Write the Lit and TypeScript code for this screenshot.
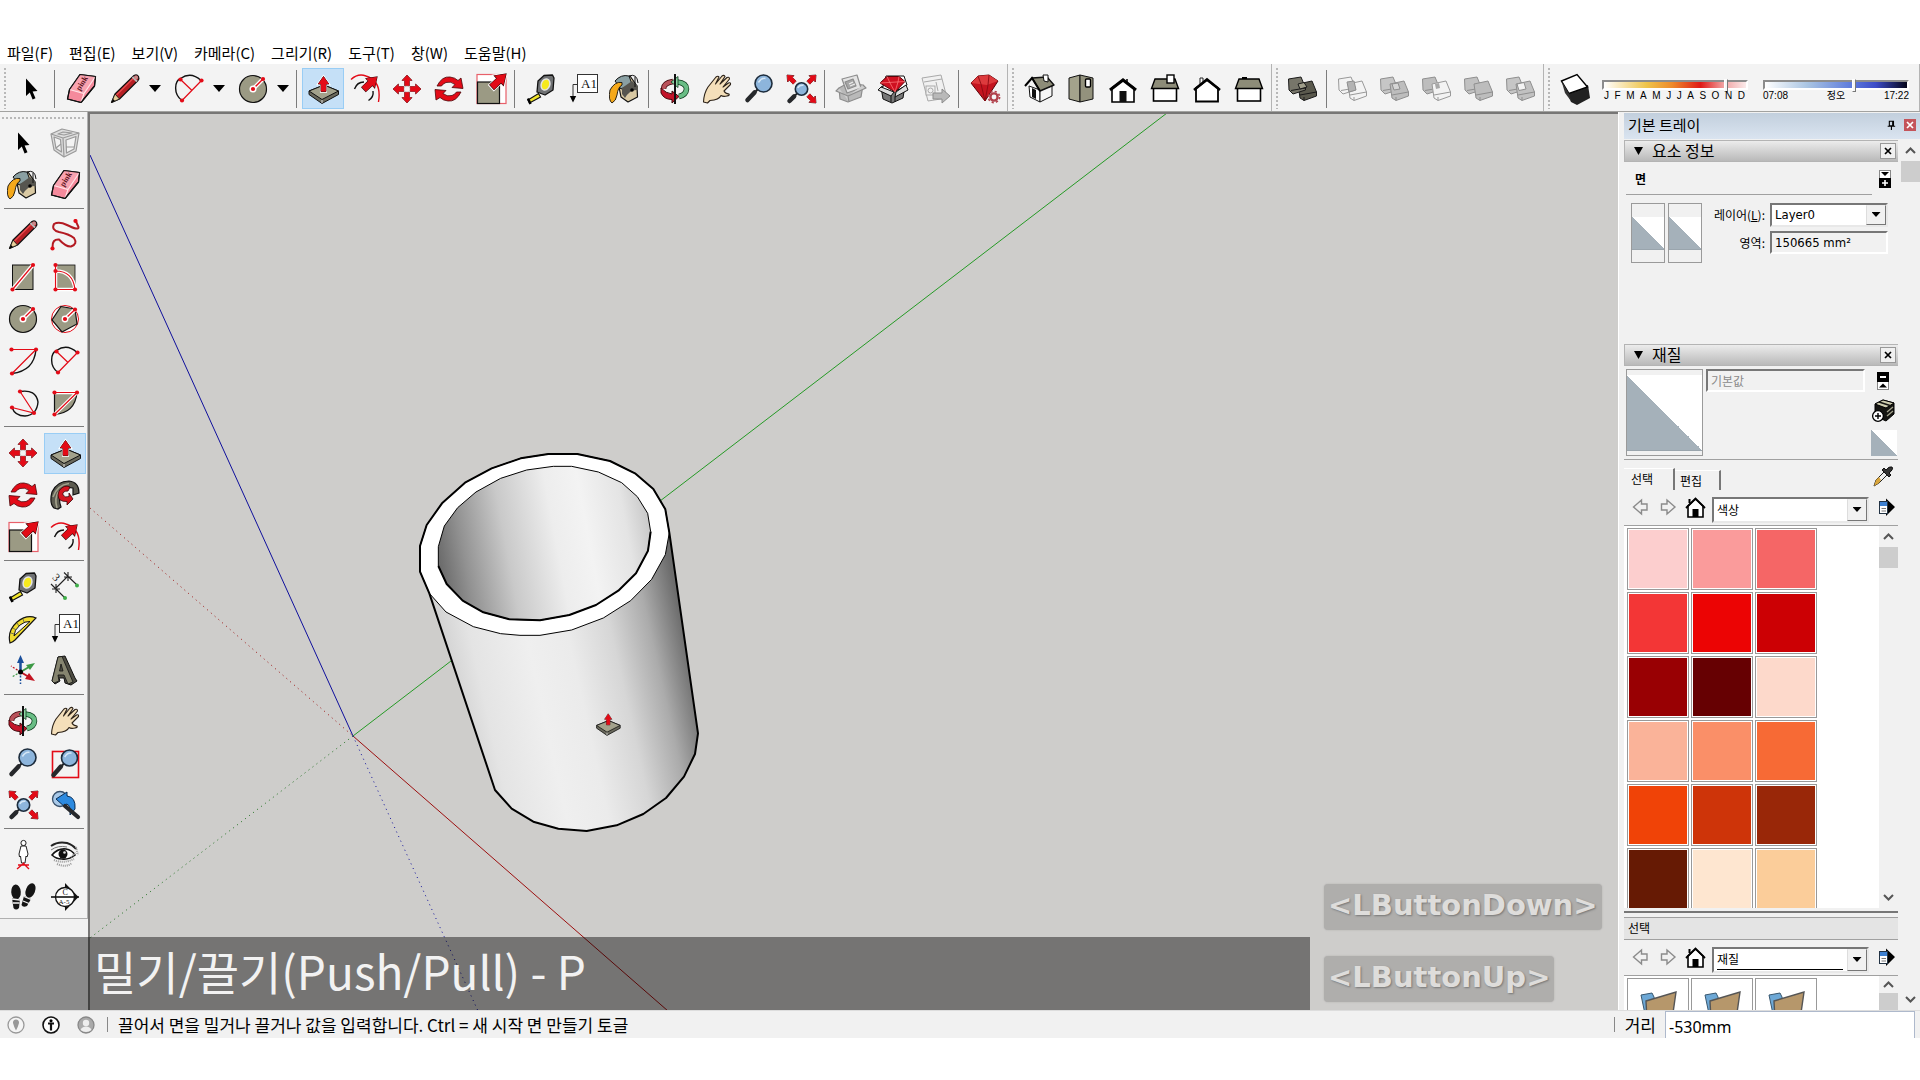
import { LitElement, html, css, svg, TemplateResult, SVGTemplateResult } from "lit";
import { customElement, state } from "lit/decorators.js";
import { classMap } from "lit/directives/class-map.js";
import { styleMap } from "lit/directives/style-map.js";

const RED = "#e30b17";
const INK = "#111";
const OLIVE = "#9b9a84";

const dot = (x: number, y: number) => svg`<circle cx=${x} cy=${y} r="2.1" fill=${RED} />`;

/* A fat arrow that points up, 10 wide and 12 long, its tip at 0,0 */
const fatArrow = (transform: string, halo = false) => svg`
  <path transform=${transform} d="M0 0L5 6H2.4V12H-2.4V6H-5Z" fill=${RED}
    stroke=${halo ? "#fff" : "#3a0508"} stroke-width=${halo ? 2 : 0.8} paint-order="stroke" />`;

const slab = svg`
  <path d="M2 18L17 12L31.500 18V21.500L15 30.500L2 21.500Z" fill="#6a695c" stroke=${INK} stroke-width="1" />
  <path d="M2 18L17 12L31.500 18L15 26.500Z" fill="#a3a28c" stroke=${INK} stroke-width="1" />
  <path d="M15 27V30" stroke="#ddd" stroke-width="1" />`;

const lens = (cx: number, cy: number, r: number, hx: number, hy: number) => svg`
  <path d="M${cx - r * 0.7} ${cy + r * 0.7}L${hx} ${hy}" stroke="#222" stroke-width="2" />
  <path d="M${cx - r * 0.7 - 3} ${cy + r * 0.7 + 3}L${hx} ${hy}" stroke="#26282b" stroke-width="4.500" stroke-linecap="round" />
  <circle cx=${cx} cy=${cy} r=${r} fill="#8db5dc" stroke="#1d2c3c" stroke-width="1.600" />
  <path d="M${cx - r * 0.6} ${cy - 1}Q${cx - 2} ${cy - r * 0.7} ${cx + 2} ${cy - r * 0.6}" stroke="#d6e7f6" stroke-width="1.500" fill="none" />`;

const solidFront = (fill: string, line: string) => svg`
  <path d="M12 12L26 9L30.500 20V24L18 28.500L14 26Z" fill=${fill} stroke=${line} />
  <path d="M14 23L30.500 20M18 28.500V25" stroke=${line} fill="none" />`;
const solidBack = (fill: string, line: string) => svg`
  <path d="M2.500 7L15 5L19.500 16V18L7 22L3 18Z" fill=${fill} stroke=${line} />
  <path d="M5 18.500L19.500 16" stroke=${line} fill="none" />`;

const ICONS: Record<string, SVGTemplateResult> = {
  select: svg`<path d="M11 5.500V23L14.800 19.500L17.600 26.500L20.500 25.200L17.600 18.600L22.500 18Z" fill="#000" />`,
  eraser: svg`
    <path d="M15 1.500L30.500 3.500L29.500 13L16 29.500L2.500 26L4.500 16.500Z" fill="#f58a9c" stroke=${INK} stroke-width="1.200" stroke-linejoin="round" />
    <path d="M4.500 16.500L15 1.500L30.500 3.500L19 20.500Z" fill="#f9a3b0" />
    <path d="M4.500 16.500L19 20.500L30.500 3.500M19 20.500L16 29.500" fill="none" stroke="#ffe2e6" stroke-width="1.200" />
    <path d="M15 1.500L30.500 3.500L29.500 13L16 29.500L2.500 26L4.500 16.500Z" fill="none" stroke=${INK} stroke-width="1.200" stroke-linejoin="round" />
    <text x="11" y="17" transform="rotate(-58 14 14)" font-family="Liberation Serif, serif" font-size="8" font-weight="700" fill="#5c1420">pink</text>`,
  pencil: svg`
    <path d="M2.500 29.500L6 21L25 2.500Q28 1 29.500 3.500Q30.500 5.500 29 7.500L10.500 26Z" fill="#b51f24" stroke=${INK} stroke-width="1.200" stroke-linejoin="round" />
    <path d="M7.500 22L24.500 5" stroke="#e8484c" stroke-width="1.500" />
    <path d="M2.500 29.500L6 21L10.500 26Z" fill="#e9cf9b" stroke=${INK} stroke-width=".8" />
    <path d="M2.500 29.500L4 26L6 28Z" fill="#000" />
    <path d="M23.500 4L28 8.500" stroke="#bbb" stroke-width="1.800" /><circle cx="27" cy="4.500" r="2" fill="#c98a8a" />`,
  arc2: svg`
    <path d="M9 27.500C0 21 1.500 8 7.500 5.500Q18 -2 28 7.500" fill="none" stroke=${INK} stroke-width="1.400" />
    <path d="M9 27.500L28.500 7.500M7.500 6.500L18.500 17" stroke=${RED} stroke-width="1.200" />${dot(7.5, 6.500)}${dot(28.500, 7.500)}${dot(9, 27.500)}`,
  circle: svg`
    <circle cx="16" cy="16" r="13.500" fill=${OLIVE} stroke=${INK} stroke-width="1.200" />
    <path d="M16 16L26 6" stroke="#fff" stroke-width="4" /><path d="M16 16L26 6" stroke=${RED} stroke-width="1.300" />
    <circle cx="16" cy="16" r="3.500" fill="#fff" />${dot(16, 16)}${dot(26, 6)}`,
  push: svg`${slab}${fatArrow("translate(16.500 3.500) scale(1.050 1.250)", true)}${fatArrow("translate(16.500 3.500) scale(1.050 1.250)")}`,
  offset: svg`
    <path d="M2 6.500Q9 0 17 3Q33 8 29.500 29" fill="none" stroke=${RED} stroke-width="1.400" />
    <path d="M5.500 16Q8 9 15 9M24 18Q25 24 19.500 27.500" fill="none" stroke=${INK} stroke-width="1.400" />
    ${fatArrow("translate(28 4) rotate(47) scale(1.250 1.500)")}`,
  move: svg`<g>
    ${fatArrow("translate(16 2) scale(1 .9)")}${fatArrow("translate(30 16) rotate(90) scale(1 .9)")}
    ${fatArrow("translate(16 30) rotate(180) scale(1 .9)")}${fatArrow("translate(2 16) rotate(270) scale(1 .9)")}</g>
    <circle cx="16" cy="16" r="2.600" fill="#f3f3f3" />`,
  rotate: svg`
    <path d="M4 13Q9 3 17 4Q22 4.500 25 7.500L28 5L30 15.500L19 14.500L22 11.500Q18 8 13 9.500Q10 10.500 8.500 13Z" fill=${RED} stroke="#4a0508" stroke-width=".8" />
    <path d="M28 19Q23 29 15 28Q10 27.500 7 24.500L3 27L2 16.500L13 17.500L10 20.500Q14 24 19 22.500Q22 21.500 23.500 19Z" fill=${RED} stroke="#4a0508" stroke-width=".8" />`,
  scale: svg`
    <rect x="2" y="1.500" width="29" height="29" fill="#fff" stroke="#e8606a" stroke-width="1.200" />
    <rect x="2.500" y="9" width="22" height="21.500" fill=${OLIVE} stroke=${INK} stroke-width="1.200" />
    ${fatArrow("translate(31 1) rotate(47) scale(1.300 1.600)", true)}${fatArrow("translate(31 1) rotate(47) scale(1.300 1.600)")}`,
  tape: svg`
    <path d="M3 27L13.500 20.500L15.500 24L4.500 30Z" fill="#f2e52c" stroke=${INK} stroke-width="1.200" /><path d="M3 25.500L5.500 31" stroke="#000" stroke-width="2.500" />
    <path d="M13 8L19 2.500L27.500 2L29 5L28 17L20 22L12 19Z" fill="#6f7173" stroke=${INK} stroke-width="1.300" stroke-linejoin="round" />
    <ellipse cx="20.500" cy="11.500" rx="5" ry="6.500" transform="rotate(20 20.500 11.500)" fill="#e4e4e4" /><ellipse cx="20.500" cy="11.500" rx="3.500" ry="5" transform="rotate(20 20.500 11.500)" fill="#f6ea1d" />`,
  text: svg`
    <rect x="10.500" y="1.500" width="20" height="18" fill="#fff" stroke="#333" /><path d="M10 11.500H6V24" fill="none" stroke="#333" /><path d="M2.800 23H9.200L6 29.500Z" fill="#000" />
    <text x="14" y="15" font-family="Liberation Serif, serif" font-size="13" fill="#111">A1</text>`,
  paint: svg`
    <path d="M9 9L21 3L28 13L28.500 24L19 29L12 24Z" fill="#d9c9a3" stroke=${INK} stroke-width="1.200" stroke-linejoin="round" />
    <path d="M6 8Q12 1 20 3L23 11L12 16Z" fill="#8aa0a3" stroke=${INK} /><path d="M13 21L13 15L23 8L29 13V17Q21 16 16 25Z" fill="#56554f" />
    <path d="M20 3Q28 0 29 10M26 4V14" fill="none" stroke=${INK} /><circle cx="23" cy="17" r="1.800" fill="#000" />
    <path d="M13 9.500Q6 8 1 17Q-1 27 3 30Q7 28 8 22Q9 14 13 12Z" fill="#f5a91b" stroke=${INK} stroke-width=".9" />`,
  orbit: svg`
    <path d="M14 8.500Q4.500 10 4.500 16" fill="none" stroke="#40070b" stroke-width="5.500" /><path d="M14 8.500Q4.500 10 4.500 16" fill="none" stroke="#b9525a" stroke-width="4" />
    <path d="M18 9Q27.500 10 27.500 16Q27 22 20 23.500" fill="none" stroke="#0c3b1c" stroke-width="5.500" /><path d="M18 9Q27.500 10 27.500 16Q27 22 20 23.500" fill="none" stroke="#69bd85" stroke-width="4" />
    <path d="M19 3.500V14.500L12 9Z" fill="#8ed5a4" stroke="#0c3b1c" stroke-width=".8" />
    <path d="M2 15V20Q5 26.500 13 26.500V30L20 23.500L13 18V21Q7 20.500 2 15Z" fill="#c4142a" stroke="#40070b" />
    <path d="M16 1V31" stroke="#111" stroke-width="2" />`,
  hand: svg`<path d="M2.500 29Q3 20 7 14L15 4Q17 2.500 18 4L14.500 11L21 3Q23 1.500 24 3.500L19 11L26 4.500Q28.500 3.500 28.500 6L22 14L27.500 10Q30 9 29.500 11.500L23 18Q24 20.500 28 21Q29 22.500 26 23Q22 24 20 22.500Q18 27 9 27.500L6.500 30Z" fill="#f4dfba" stroke="#2b2117" stroke-width="1.100" stroke-linejoin="round" />`,
  zoom: svg`${lens(20.5, 10.500, 8.500, 4.500, 27)}`,
  extents: svg`
    ${lens(16.5, 16, 6.200, 4.500, 28)}
    ${fatArrow("translate(2 2) rotate(315) scale(.9)")}${fatArrow("translate(31 2) rotate(45) scale(.9)")}${fatArrow("translate(31 30) rotate(135) scale(.9)")}`,
  warehouseGet: svg`
    <g fill="#b9b9b9" stroke="#8d8d8d" stroke-linejoin="round" stroke-width="1.200"><path d="M4 15L13 10L28 12L26 24L13 29L5 26Z" /><path d="M7 6L22 2L26 15L12 20Z" fill="#e3e3e3" /><path d="M10 9L18 6L21 13L13 16Z" fill="#a6a6a6" /><path d="M14 11L18 9M15 13L20 11" stroke="#eee" /><path d="M4 15L1 18L13 23L14 29M13 23L31 15L28 12" fill="#cfcfcf" /></g>`,
  warehouseShare: svg`
    <path d="M4 14L12 10L28 12L26 25L15 30L6 26Z" fill="#777" stroke=${INK} /><path d="M9 3L27 3L30 12L17 19L5 17Z" fill="#fff" stroke=${INK} />
    <path d="M3 10L10 3.500H22L28 8.500L18 19Z" fill="#cf1020" stroke="#5d0409" /><path d="M3 10L28 8.500M10 3.500L13 10L18 19L21 9L22 3.500" fill="none" stroke="#ff8080" stroke-width=".7" />
    <path d="M4 14L1 17L14 23L17 19ZM19 19L29 12L31 17L18 24Z" fill="#ddd" stroke=${INK} /><path d="M14 23V29M18 24V29" stroke=${INK} />`,
  warehouseLayout: svg`
    <g fill="#f0f0f0" stroke="#a9a9a9"><path d="M3 5L22 2L28 25L9 28Z" /><path d="M5 9L23 6" /><rect x="7" y="13" width="9" height="9" /><circle cx="11.500" cy="17.500" r="2.500" /><path d="M17 9L19 18" /></g>
    <path d="M14 20H23V16L31 23L23 30V26H14Z" fill="#b9b9b9" stroke="#8d8d8d" />`,
  extension: svg`
    <path d="M2 10L9 3L20 2L29 8L16 28Z" fill="#c4141f" stroke="#5d0409" /><path d="M9 3L20 2L29 8L18 12L2 10Z" fill="#dd3a3d" /><path d="M9 3L12 11L16 28L19 12L20 2" fill="none" stroke="#8b0a12" stroke-width=".9" />
    <circle cx="25" cy="24" r="3.600" fill="#f3f3f3" stroke="#b0404a" stroke-width="2.400" /><circle cx="25" cy="24" r="5.600" fill="none" stroke="#b0404a" stroke-width="1.600" stroke-dasharray="2.200 2.200" />`,
  iso: svg`
    <path d="M6 13L17 17V29L7 24Z" fill="#fff" stroke=${INK} /><path d="M17 17L29 13V23L17 29Z" fill="#f7f7f7" stroke=${INK} /><path d="M9 15L13 17V26L9 24Z" fill="#111" />
    <path d="M9 5L24 4L31 12L17 18Z" fill="#8d8c78" stroke=${INK} stroke-width="1.400" stroke-linejoin="round" /><path d="M2 13L9 5L17 18" fill="none" stroke="#000" stroke-width="2" /><path d="M20 2H25V9L21 8Z" fill="#fff" stroke=${INK} />`,
  top: svg`<path d="M4 5L15 2V29L4 26Z" fill="#a3a28c" stroke=${INK} /><path d="M15 2L28 5V26L15 29Z" fill="#93927d" stroke=${INK} /><rect x="20.500" y="6" width="5" height="8" rx="1" fill="#fff" stroke="#000" stroke-width="1.400" />`,
  front: svg`<path d="M5 15V29H27V15L16 7Z" fill="#fff" stroke="#000" stroke-width="1.600" /><path d="M3 17L16 7L29 17" fill="none" stroke="#000" stroke-width="3" /><rect x="12.500" y="18" width="7" height="11" fill="#111" /><path d="M20 6V9" stroke="#000" stroke-width="1.500" />`,
  right: svg`<rect x="4.500" y="15" width="23" height="13" fill="#fff" stroke="#000" stroke-width="1.600" /><path d="M6 6H26L29.500 15.500H2.500Z" fill="#8d8c78" stroke="#000" stroke-width="1.400" /><rect x="18" y="2" width="7" height="8" fill="#fff" stroke="#000" stroke-width="1.400" />`,
  back: svg`<path d="M9 11V5H12V9" fill="#fff" stroke="#222" /><path d="M5 15V28.500H27V15L16 7Z" fill="#fff" stroke="#000" stroke-width="1.800" /><path d="M3 17L16 6.500L29 17" fill="none" stroke="#000" stroke-width="2.600" />`,
  left: svg`<rect x="4.500" y="15" width="23" height="13" fill="#fff" stroke="#000" stroke-width="1.600" /><path d="M6 6H26L29.500 15.500H2.500Z" fill="#8d8c78" stroke="#000" stroke-width="1.400" /><path d="M9 5H14" stroke="#000" stroke-width="2" />`,
  shell: svg`<g stroke-linejoin="round" transform="translate(-1 -1)">${solidFront("#5a594d", "#1a1a1a")}${solidBack("#77766a", "#1a1a1a")}<path d="M12 12L18 10.500L21 15L14 17Z" fill="#a09f8b" stroke="#1a1a1a" /></g>`,
  intersect: svg`<g stroke-linejoin="round" transform="translate(-1 -1)">${solidFront("none", "#999")}${solidBack("none", "#999")}<path d="M11 10L18 9L20 18L13 20Z" fill="#b3b3b3" stroke="#8f8f8f" /></g>`,
  union: svg`<g stroke-linejoin="round" transform="translate(-1 -1)">${solidBack("#c6c6c6", "#8f8f8f")}${solidFront("#bdbdbd", "#8f8f8f")}<path d="M14 12L20 11L22 17L16 18Z" fill="#d6d6d6" stroke="#8f8f8f" /></g>`,
  subtract: svg`<g stroke-linejoin="round" transform="translate(-1 -1)">${solidBack("#bdbdbd", "#8f8f8f")}${solidFront("#f3f3f3", "#999")}<path d="M15 12L19 11L20 16L16 17Z" fill="#a8a8a8" /></g>`,
  trim: svg`<g stroke-linejoin="round" transform="translate(-1 -1)">${solidBack("#c1c1c1", "#8f8f8f")}${solidFront("#bdbdbd", "#8f8f8f")}</g>`,
  split: svg`<g stroke-linejoin="round" transform="translate(-1 -1)">${solidBack("#c6c6c6", "#8f8f8f")}${solidFront("#c1c1c1", "#8f8f8f")}<path d="M13 12L20 10.500L22 17L15 18.500Z" fill="#f3f3f3" stroke="#8f8f8f" /></g>`,
  shadow: svg`<path d="M7 17L12 29L18 32L31 25L29 12Z" fill="#222" /><path d="M2.500 8L18 1.500L28.500 14L10 20.500Z" fill="#fff" stroke="#000" stroke-width="1.400" /><path d="M2.500 8L6 20L12 28L10 20.500Z" fill="#333" />`,
  component: svg`
    <g fill="#dedede" stroke="#9a9a9a" stroke-linejoin="round" stroke-width="1.200"><path d="M2 7L13 2L30 6L27 24L15 30L5 23Z" /><path d="M2 7L14 11L30 6M14 11L15 30" fill="none" /><path d="M5 10L11.500 12.500L12.500 25L7 21.500ZM17 13L27 9.500L25 22L17.500 26Z" fill="#f3f3f3" /><path d="M7 21L12 17M17 20L25 20M9 7L14 5L23 6L15 8Z" /></g>`,
  freehand: svg`<path d="M3.500 28.500Q3 20 10 20.500Q17 28 22 27.500Q29 25 25 19Q20 15 10 13Q2 11 5 5Q10 2 18 6Q30 12 29.500 8L26.500 1.500" fill="none" stroke="#b31a22" stroke-width="2" />${dot(26.500, 2)}${dot(3.500, 29.500)}`,
  rect: svg`<rect x="5.500" y="4" width="20.500" height="24.500" fill=${OLIVE} stroke=${INK} /><path d="M5.500 28.500L26 4" stroke="#fff" stroke-width="4" /><path d="M5.500 28.500L26 4" stroke=${RED} stroke-width="1.200" />${dot(26, 4)}${dot(5.500, 28.500)}`,
  rotRect: svg`<rect x="6.500" y="4" width="19.500" height="24.500" fill=${OLIVE} stroke=${INK} stroke-width=".8" /><path d="M6.500 4V28.500H26M6.500 10Q24 10 26 28.500" fill="none" stroke="#fff" stroke-width="3.500" /><path d="M6.500 4V28.500H26M6.500 10Q24 10 26 28.500" fill="none" stroke=${RED} stroke-width="1.200" />${dot(6.500, 4)}${dot(6.500, 10)}${dot(6.500, 28.500)}${dot(26, 28.500)}`,
  polygon: svg`<circle cx="16" cy="16" r="13.500" fill="#fff" stroke=${RED} /><path d="M12 3.500L26 6L28 21L13 29L3 17Z" fill=${OLIVE} stroke=${INK} stroke-width="1.200" /><path d="M16 16L26 6.500" stroke="#fff" stroke-width="4" /><path d="M16 16L26 6.500" stroke=${RED} stroke-width="1.200" /><circle cx="16" cy="16" r="3.400" fill="#fff" />${dot(16, 16)}${dot(26, 6.500)}`,
  arc: svg`<path d="M29 4.500Q27 26 5 28.500" fill="none" stroke=${INK} stroke-width="1.400" /><path d="M4.500 4.500H29L5 28.500" fill="none" stroke=${RED} stroke-width="1.200" />${dot(4.500, 4.500)}${dot(29, 4.500)}${dot(5, 28.500)}`,
  arc3: svg`<path d="M13 4.500Q29 2 31 15Q30 28 18 29Q8 29 5 20.500" fill="none" stroke=${INK} stroke-width="1.400" /><path d="M13 4.500L27 26L5 20.500" fill="none" stroke=${RED} stroke-width="1.200" />${dot(13, 4.500)}${dot(27, 26)}${dot(5, 20.500)}`,
  pie: svg`<path d="M5.500 5.500H28Q26 26 5.500 27.500Z" fill=${OLIVE} stroke=${INK} stroke-width="1.200" /><path d="M5.500 5.500H28L5.500 27.500" fill="none" stroke="#fff" stroke-width="3.400" /><path d="M5.500 5.500H28L5.500 27.500" fill="none" stroke=${RED} stroke-width="1.200" />${dot(5.500, 5.500)}${dot(28, 5.500)}${dot(5.500, 27.500)}`,
  follow: svg`<path d="M30 14Q30 3 20 2Q8 2 3 13Q0 24 5 29L9 30L12 28Q9 20 12 14Q17 7 24 9L24 16Z" fill="#5c5b50" stroke=${INK} stroke-width="1.200" /><path d="M4 18Q8 6 20 4.500M8 29Q5 19 10 12" fill="none" stroke="#a3a28c" stroke-width="1.600" />
    <path d="M10 12Q15 5 21 8L19 12Q13 12 14 16Q16 19 20 17.500V14L24 20L18 26V22.500Q9 23 9 16Z" fill="#d5141f" stroke="#3a0508" stroke-width=".8" />`,
  dimension: svg`<path d="M6.500 17.500L19 5M2 13L13 24L16 27M15 1.500L28 14M19 1V10M7 13V22M3 18H11M15 6H23" fill="none" stroke="#222" stroke-width="1.100" /><circle cx="16" cy="27" r="2" fill="#3fae49" /><circle cx="28" cy="14.500" r="2" fill="#3fae49" /><text x="4" y="10" transform="rotate(45 7 7)" font-family="Liberation Serif, serif" font-size="11" fill="#111">3</text>`,
  protractor: svg`<path d="M3 30Q0 18 10 9Q20 1 29 5L8 27Q6 29 3 30Z" fill="#f0dc2e" stroke=${INK} stroke-width="1.200" /><path d="M7 23Q7 17 13 12Q18 8 23 8.500Z" fill="#f3f3f3" stroke=${INK} /><path d="M4 20L7 21M6 15L9 17M10 10L12 13M16 6L17 9" stroke="#555" stroke-width=".8" />`,
  axes: svg`<path d="M13.500 17V7" stroke="#1a4f9c" stroke-width="2.500" /><path d="M13.500 0L17 8H10Z" fill="#1a4f9c" /><path d="M13.500 17L22 12" stroke="#3c9a45" stroke-width="2" /><path d="M28 8L23 15L19 10Z" fill="#3c9a45" /><path d="M13.500 17L22 22" stroke="#c31522" stroke-width="2" /><path d="M28 26L18 24L22 18Z" fill="#c31522" />
    <path d="M13.500 17V29" stroke="#1a4f9c" stroke-width="1.500" stroke-dasharray="2 1.500" /><path d="M13.500 17L4 11" stroke="#c31522" stroke-width="1.300" stroke-dasharray="2 1.500" /><path d="M13.500 17L5 22" stroke="#3c9a45" stroke-width="1.300" stroke-dasharray="2 1.500" /><circle cx="13.500" cy="17" r="2.500" fill="#000" />`,
  text3d: svg`<path d="M3 26L9 2L16 1L26 23L28 26L22 30L16 28L15 23H10L11 26L6 29Z" fill="#4d4c42" stroke=${INK} /><path d="M3 26L9 2L13 1.500L24 27L19 29L15 20H9L10 26L5 28ZM10.500 16H14L12 9Z" fill="#85846f" stroke=${INK} stroke-width=".8" fill-rule="evenodd" />`,
  zoomWindow: svg`<rect x="3.500" y="4.500" width="26" height="26" fill="none" stroke=${RED} stroke-width="1.600" />${lens(20.5, 11, 8, 4.500, 28)}`,
  previous: svg`<circle cx="11" cy="10" r="7.500" fill="#a9c9e8" stroke="#38506a" stroke-width="1.300" /><path d="M7 10L18 3V7Q27 8 26 20L21 26Q22 15 17 15V19Z" fill="#2c8ae0" stroke="#0b2e55" /><path d="M16 17L29 28" stroke="#26282b" stroke-width="4.200" stroke-linecap="round" />`,
  position: svg`<circle cx="16.500" cy="4" r="2.600" fill="#fff" stroke="#222" /><path d="M14 7H19L21 15L20 18L19 17L18 24H14.500L13.500 17L12.500 18L12 15Z" fill="#fff" stroke="#222" /><path d="M16 24L22 30M17 24L10 30M11 26H22" stroke=${RED} stroke-width="1.400" />`,
  look: svg`<path d="M2 7Q9 2 18 4Q24 6 27 10" fill="none" stroke="#222" stroke-width="2" /><path d="M2 11Q9 6 18 8" fill="none" stroke="#777" />
    <path d="M3 16Q9 9 17 10Q23 11 26 16Q20 21 13 20Q7 20 3 16Z" fill="#fff" stroke="#111" stroke-width="1.600" /><circle cx="14" cy="15" r="4.500" fill="#111" /><circle cx="15.500" cy="13.500" r="1.300" fill="#ddd" />
    <path d="M5 21Q14 25 25 20M8 25Q17 29 23 24" fill="none" stroke="#999" stroke-width="2" stroke-dasharray="1 1" /><path d="M27 8L29 16M22 18L27 14" stroke="#999" stroke-width="2" stroke-dasharray="1 1" />`,
  walk: svg`<g fill="#151515"><ellipse cx="9" cy="11" rx="4.800" ry="7.500" transform="rotate(-4 9 11)" /><path d="M5 17L13 18L12 27Q9 30 6.500 27Z" /><ellipse cx="23.500" cy="9.500" rx="4.600" ry="7.500" transform="rotate(22 23.500 9.500)" /><path d="M17 15L24 18L20 25Q16 27 14.500 24Z" /></g><path d="M5 18L13 19M6 22H12.500M17 15.500L24 18.500M16 20L22 22.500" stroke="#f3f3f3" stroke-width="1.300" />`,
  section: svg`<path d="M16 2L29.500 16L16 30Z" fill="#111" /><circle cx="16" cy="16" r="9.500" fill="#fff" stroke="#111" stroke-width="1.300" /><path d="M2 16H30" stroke="#111" stroke-width="1.600" />
    <text x="13.500" y="14" font-family="Liberation Serif, serif" font-size="8" fill="#111">C</text><text x="9.500" y="22.500" font-family="Liberation Serif, serif" font-size="7" fill="#111">A-5</text>`,
  backNav: svg`<path d="M9.500 15L17.500 8V12H23V18H17.500V22Z" fill="#f1f1f1" stroke="#8b8b8b" stroke-width="1.400" />`,
  nextNav: svg`<path d="M24 15L16 8V12H10.500V18H16V22Z" fill="#f1f1f1" stroke="#8b8b8b" stroke-width="1.400" />`,
  home: svg`<path d="M10 14V25H25V14L17.500 7Z" fill="#fff" stroke="#000" stroke-width="1.600" /><path d="M8 16L17.500 6.500L27 16" fill="none" stroke="#000" stroke-width="1.800" /><rect x="14.500" y="17" width="6" height="8" fill="#000" /><path d="M11.500 11V7" stroke="#000" stroke-width="2" />`,
  details: svg`<path d="M15 6.500L24 15L15 24V20H9V11H15Z" fill="#000" /><rect x="8.500" y="9.500" width="8" height="12" fill="#fff" stroke="#234" /><rect x="9" y="10" width="7" height="4" fill="#3c7fd0" /><path d="M10.500 16.500H15M10.500 19H15" stroke="#777" />`,
  dropper: svg`<path d="M8 28L10 22L18 14L21 17L13 25Z" fill="#eee" stroke="#222" /><path d="M8 28L10 22L13 19L15 22L13 25Z" fill="#d9a53a" /><path d="M16 12L23 19L25 17L23 15Q28 11 26 9Q23 8 20 12L18 10Z" fill="#333" stroke="#111" />`,
  create: svg`<path d="M8 10L16 6L27 9V20L19 27L8 22Z" fill="#151512" stroke="#000" /><path d="M8 10L19 14L27 9L16 6Z" fill="#cfcdb0" stroke="#000" /><path d="M12 8L23 11.500" stroke="#151512" stroke-width="1.600" /><path d="M20 18L26 13M20 22L26 17" stroke="#a3a28c" stroke-width="1.300" /><circle cx="11" cy="22" r="5.400" fill="#fff" stroke="#000" stroke-width="1.300" /><path d="M11 19V25M8 22H14" stroke="#000" stroke-width="1.400" />`,
};

const icon = (name: string) => html`<svg class="icon" viewBox="0 0 32 32" aria-hidden="true">${ICONS[name]}</svg>`;

type Tool = [id: string, label: string, split?: boolean] | "|";

const MAIN_GROUPS: Tool[][] = [
  [
    ["select", "선택"], "|", ["eraser", "지우개"], ["pencil", "선", true], ["arc2", "호", true], ["circle", "원", true], "|",
    ["push", "밀기/끌기"], ["offset", "오프셋"], ["move", "이동"], ["rotate", "회전"], ["scale", "배율"], "|",
    ["tape", "줄자"], ["text", "문자"], ["paint", "페인트통"], "|",
    ["orbit", "궤도"], ["hand", "이동 보기"], ["zoom", "확대/축소"], ["extents", "범위 확대"], "|",
    ["warehouseGet", "모델 가져오기"], ["warehouseShare", "모델 공유"], ["warehouseLayout", "레이아웃으로 보내기"], "|", ["extension", "확장 프로그램"],
  ],
  [["iso", "등각"], ["top", "평면"], ["front", "정면"], ["right", "우측"], ["back", "후면"], ["left", "좌측"]],
  [["shell", "외부 쉘"], "|", ["intersect", "교차"], ["union", "결합"], ["subtract", "빼기"], ["trim", "잘라내기"], ["split", "분할"]],
];

const SIDE_GROUPS: [string, string][][] = [
  [["select", "선택"], ["component", "구성 요소"], ["paint", "페인트통"], ["eraser", "지우개"]],
  [["pencil", "선"], ["freehand", "자유형"], ["rect", "직사각형"], ["rotRect", "회전 직사각형"], ["circle", "원"], ["polygon", "다각형"], ["arc", "호"], ["arc2", "2점 호"], ["arc3", "3점 호"], ["pie", "파이"]],
  [["move", "이동"], ["push", "밀기/끌기"], ["rotate", "회전"], ["follow", "따라가기"], ["scale", "배율"], ["offset", "오프셋"]],
  [["tape", "줄자"], ["dimension", "치수"], ["protractor", "각도기"], ["text", "문자"], ["axes", "축"], ["text3d", "3D 문자"]],
  [["orbit", "궤도"], ["hand", "이동 보기"], ["zoom", "확대/축소"], ["zoomWindow", "창 확대"], ["extents", "범위 확대"], ["previous", "이전"]],
  [["position", "카메라 배치"], ["look", "둘러보기"], ["walk", "걷기"], ["section", "단면"]],
];

const MENUS = ["파일(F)", "편집(E)", "보기(V)", "카메라(C)", "그리기(R)", "도구(T)", "창(W)", "도움말(H)"];

const COLORS = [
  "#fccece", "#fa9b9b", "#f56666", "#f33636", "#ec0404", "#cc0004", "#990003", "#660002", "#fdd9cb",
  "#fab399", "#fa8f68", "#f76a35", "#f04307", "#ce3409", "#992708", "#661a04", "#fee6d0", "#fbcd9a",
];

@customElement("app-root")
export class AppRoot extends LitElement {
  @state() private tool = "push";

  static styles = css`
    :host {
      display: flex; flex-direction: column; box-sizing: border-box; height: 100vh; min-height: 700px;
      padding: 40px 0 42px; background: #fff; color: #000; overflow: hidden;
      font-family: "Noto Sans CJK KR", sans-serif; font-size: 15px; line-height: 20px;
    }
    * { box-sizing: border-box; }
    button, input, select { font: inherit; color: inherit; margin: 0; padding: 0; border: 0; border-radius: 0; background: none; }
    .icon { width: 32px; height: 32px; display: block; flex: none; }

    .menu { display: flex; gap: 16px; height: 24px; padding: 3px 7px 1px; }
    .menu button { white-space: nowrap; }

    .bars { display: flex; height: 48px; background: #f3f3f3; border-bottom: 1px solid #a2a2a0; }
    .bar { display: flex; padding: 4px 1px 2px 4px; border-right: 1px solid #b4b4b4; }
    .bar.wide { flex: 1; padding-right: 10px; }
    .grip { flex: none; width: 2px; margin-right: 4px; background: repeating-linear-gradient(#b8b8b8 0 2px, transparent 2px 4px); }
    .tool { display: grid; place-items: center; width: 42px; height: 41px; }
    .tool.on { background: #c5e0f7; border: 1px solid #99cdf5; }
    .pair { display: flex; padding-left: 2px; }
    .drop { width: 20px; height: 41px; display: grid; place-items: center start; padding-left: 3px; }
    .rule { flex: none; width: 1px; margin: 2px 5px 1px 2px; background: #7c7c7c; }
    .tri { width: 12px; height: 7px; background: #000; clip-path: polygon(0 0, 100% 0, 50% 100%); }
    .tri.small { width: 9px; height: 5px; }

    .sun { flex: 1; display: flex; flex-direction: column; padding-top: 12px; margin-left: 6px; font: 10px/12px "Liberation Sans", "Noto Sans CJK KR", sans-serif; }
    .sun + .sun { margin-left: 15px; }
    .range { appearance: none; width: 100%; height: 10px; border: 2px solid; border-color: #8c8c8c #fff #fff #8c8c8c; }
    .range.months { background: linear-gradient(90deg, #fff, #efc44a 30%, #ee8a2a 48%, #e01a16 68%, #f0a0a0 84%, #fbeaea); }
    .range.hours { background: linear-gradient(90deg, #fff, #a9c4e2 30%, #5b78dc 62%, #3d4cc8 78%, #05051a); }
    .range::-webkit-slider-thumb { appearance: none; width: 4px; height: 13px; background: #f6f6f6; border: 1px solid; border-color: #fff #777 #777 #fff; }
    .ticks { display: flex; justify-content: space-between; padding: 0 3px 0 2px; }
    .hours-ticks { padding: 0; }

    .main { flex: 1; display: flex; min-height: 0; position: relative; background: #f1f1f1; }
    .side { flex: none; width: 88px; }
    .toolbox { padding: 5px 1px 0 2px; border-right: 1px solid #b0b0b0; border-bottom: 1px solid #b0b0b0; background: #f3f3f3; }
    .grip-h { height: 2px; margin-bottom: 3px; background: repeating-linear-gradient(90deg, #b8b8b8 0 2px, transparent 2px 4px); }
    .pairs { display: grid; grid-template-columns: 42px 42px; grid-auto-rows: 42px; align-items: center; }
    .rule-h { height: 1px; margin: 2px 2px 5px; background: #7c7c7c; }

    .stage { flex: 1; min-width: 0; background: #cecdcb; border: solid #777675; border-width: 2px 0 0 2px; overflow: hidden; position: relative; }
    .scene { display: block; width: 100%; height: 100%; }
    .caption { position: absolute; left: 0; right: 610px; bottom: 0; height: 73px; padding-left: 94px; background: rgba(0, 0, 0, 0.43); color: #f2f2f2; font-size: 46px; line-height: 66px; font-weight: 400; white-space: nowrap; overflow: hidden; }
    .keys { position: absolute; right: 16px; bottom: 8px; width: 278px; display: flex; flex-direction: column; align-items: flex-start; gap: 26px; }
    .key { height: 46px; padding: 0 4px; border-radius: 4px; background: #afaeac; color: #dedddb; box-shadow: 0 0 2px #afaeac; text-shadow: 1px 1px 2px #777; font: 700 29px/42px "DejaVu Sans", sans-serif; white-space: nowrap; }

    .tray { flex: none; width: 302px; display: flex; flex-direction: column; padding: 1px 0 0 5px; border-left: 1px solid #fff; background: #f1f1f1; }
    .tray-title { display: flex; align-items: center; gap: 8px; height: 26px; padding: 0 4px 2px; background: linear-gradient(#c2cfdd, #dae4f0); }
    .tray-title span { flex: 1; }
    .close-red { width: 12px; height: 12px; display: grid; place-items: center; background: #c4545a; color: #fff; }
    .mini { width: 8px; height: 8px; display: block; }
    .pin { width: 10px; height: 10px; display: block; }
    .tray-body { flex: 1; min-height: 0; display: flex; padding-top: 1px; }
    .panels { flex: 1; min-width: 0; display: flex; flex-direction: column; }
    .head { flex: none; display: flex; align-items: center; height: 22px; padding: 0 2px 0 9px; gap: 9px; border: 1px solid #b4b4b4; border-width: 1px 0 1px 1px; background: linear-gradient(#ececec, #b9b9b9); font-size: 16px; }
    .head span { flex: 1; height: 20px; line-height: 18px; }
    .head button { width: 16px; height: 16px; display: grid; place-items: center; border: 1px solid #999; background: #f0f0f0; }
    .fold { width: 9px; height: 8px; background: #000; clip-path: polygon(0 0, 100% 0, 50% 100%); }

    .info { flex: none; height: 182px; padding: 1px 7px 0 2px; }
    .info-top { display: flex; align-items: center; justify-content: space-between; height: 32px; margin-right: 19px; padding-left: 9px; border-bottom: 1px solid #a0a0a0; font-size: 12px; font-weight: 700; }
    .info-top button { margin-right: -19px; }
    .toggle { width: 12px; height: 18px; display: block; }
    .info-row { display: flex; gap: 3px; padding: 8px 3px 0 5px; }
    .face { width: 34px; height: 60px; display: flex; align-items: center; border: 1px solid #9a9a9a; }
    .half { width: 32px; height: 33px; background: linear-gradient(to top right, #a5b1ba 50%, #fff 50%); border-bottom: 1px solid #9aa5ad; }
    .fields { flex: 1; display: grid; grid-template-columns: auto 118px; grid-auto-rows: 23px; gap: 5px; align-items: center; justify-content: end; font-size: 12px; text-align: right; }
    .tahoma { font-family: "DejaVu Sans Condensed", "DejaVu Sans", "Noto Sans CJK KR", sans-serif; font-size: 13px; }
    .combo { display: grid; grid-template-columns: 1fr 20px; border: 2px solid; border-color: #777 #e8e8e8 #e8e8e8 #777; background: #fff; min-width: 0; text-align: left; }
    .combo select { appearance: none; grid-area: 1 / 1 / 2 / 3; padding: 0 3px; min-width: 0; }
    .combo .knob { grid-area: 1 / 2; display: grid; place-items: center; pointer-events: none; background: #f1f1f1; border: 1px solid; border-color: #eee #777 #777 #ddd; }
    .field { width: 100%; min-width: 0; height: 23px; padding: 0 3px; border: 2px solid; border-color: #777 #fff #fff #777; background: #f1f1f1; }
    .field.muted { color: #8a8a8a; font-size: 12px; }

    .material { flex: none; display: flex; gap: 3px; height: 94px; padding: 3px 1px 3px 2px; border-bottom: 1px solid #a0a0a0; }
    .preview { flex: none; width: 77px; height: 87px; padding-top: 5px; border: 1px solid #9a9a9a; }
    .preview .half { width: 75px; height: 76px; }
    .mat-name { flex: 1; min-width: 0; }
    .mat-side { flex: none; width: 29px; display: flex; flex-direction: column; align-items: center; gap: 9px; padding-top: 3px; }
    .mat-side .half { width: 26px; height: 26px; border: 0; margin-left: 3px; }
    .mat-side .icon { margin: -5px 0; }
    .tabs { flex: none; display: flex; align-items: flex-end; height: 30px; font-size: 12px; }
    .tab { height: 20px; width: 46px; text-align: left; padding: 0 0 1px 5px; border: solid #777; border-width: 0 2px 0 0; border-top: 1px solid #fff; }
    .tab.on { height: 22px; width: 51px; padding: 0 0 4px 7px; }
    .tabs .pick { margin-left: auto; }
    .nav { flex: none; display: flex; align-items: center; height: 36px; border-bottom: 1px solid #a0a0a0; font-size: 12px; }
    .nav .hit { width: 27px; height: 32px; display: grid; place-items: center; }
    .nav .home { width: 29px; }
    .nav .combo { flex: 1; height: 26px; margin: 4px 2px 0 5px; }
    .nav .combo.lined select { border-bottom: 1px solid #000; margin: 0 24px 1px 3px; padding: 0; }
    .list { display: flex; min-height: 0; overflow: hidden; background: #fff; }
    .list.grow { flex: 1 1 0; }
    .list.end { flex: none; height: 34px; }
    .swatches { flex: 1; display: grid; grid-template-columns: repeat(3, 62px); grid-auto-rows: 62px; gap: 2px; padding: 2px 3px; }
    .swatch { border: 1px solid #999; padding: 1px; background-clip: content-box; }
    .folder { width: 60px; height: 60px; display: block; }
    .scroll { flex: none; width: 19px; display: flex; flex-direction: column; align-items: center; background: #f1f1f1; }
    .scroll i { width: 19px; height: 21px; background: #cdcdcd; }
    .scroll button { width: 19px; height: 21px; display: grid; place-items: center; }
    .scroll .last { margin-top: auto; }
    .scroll.outer { width: 20px; margin-left: 2px; }
    .chev { width: 11px; height: 7px; display: block; }
    .split { flex: none; height: 7px; margin-top: 3px; border: solid #777; border-width: 2px 0 1px; border-bottom-color: #a0a0a0; }
    .band { flex: none; height: 22px; padding-left: 4px; background: #e4e4e4; border-bottom: 1px solid #a0a0a0; font-size: 12px; line-height: 20px; }

    .status { flex: none; display: flex; align-items: center; height: 28px; background: #f1f1f1; font-size: 17px; white-space: nowrap; overflow: hidden; border-top: 1px solid #ddd; }
    .status .signs { display: flex; gap: 17px; padding-left: 7px; }
    .sign { width: 18px; height: 18px; display: block; }
    .bar-line { width: 1px; height: 15px; background: #888; margin: 0 10px 0 12px; }
    .status p { flex: 1; margin: 0; padding-top: 1px; }
    .status label { margin: 0 9px 0 0; padding-top: 1px; font-size: 17px; }
    .status input { width: 250px; height: 28px; margin-right: 5px; padding: 4px 3px 0; background: #fff; border: 1px solid #aeb9cc; font: 16px "Noto Sans", sans-serif; }
  `;

  private toolButton(id: string, label: string): TemplateResult {
    return html`<button class=${classMap({ tool: true, on: this.tool === id })} aria-label=${label}
      @click=${() => (this.tool = id)}>${icon(id)}</button>`;
  }

  private barItem(t: Tool) {
    if (t === "|") return html`<div class="rule"></div>`;
    const [id, label, split] = t;
    return split
      ? html`<div class="pair">${this.toolButton(id, label)}<button class="drop" aria-label="${label} 옵션"><div class="tri"></div></button></div>`
      : this.toolButton(id, label);
  }

  private chevron(down: boolean) {
    return html`<svg class="chev" viewBox="0 0 11 7" aria-hidden="true"><path d=${down ? "M1 1L5.500 5.500L10 1" : "M1 6L5.500 1.500L10 6"} fill="none" stroke="#555" stroke-width="2" /></svg>`;
  }

  private scroll(cls = "", full = true) {
    return html`<div class="scroll ${cls}"><button aria-label="위로">${this.chevron(false)}</button><i></i>
      ${full ? html`<button class="last" aria-label="아래로">${this.chevron(true)}</button>` : ""}</div>`;
  }

  private closeMark() {
    return html`<svg class="mini" viewBox="0 0 8 8" aria-hidden="true"><path d="M1 1L7 7M7 1L1 7" stroke="currentColor" stroke-width="1.700" /></svg>`;
  }

  private head(title: string) {
    return html`<div class="head"><div class="fold"></div><span>${title}</span><button aria-label="${title} 닫기">${this.closeMark()}</button></div>`;
  }

  private nav(value: string, lined = false) {
    return html`<div class="nav">
      <button class="hit" aria-label="뒤로">${icon("backNav")}</button><button class="hit" aria-label="앞으로">${icon("nextNav")}</button>
      <button class="hit home" aria-label="모델 안">${icon("home")}</button>
      <div class="combo ${lined ? "lined" : ""}"><select aria-label="라이브러리"><option>${value}</option></select><div class="knob"><div class="tri small"></div></div></div>
      <button class="hit" aria-label="세부 정보">${icon("details")}</button></div>`;
  }

  private toggle(up: boolean) {
    return html`<svg class="toggle" viewBox="0 0 12 18" aria-hidden="true">
      <rect x=".5" y=".5" width="11" height="17" fill="#fff" stroke="#888" />
      ${up
        ? svg`<rect width="12" height="10" fill="#000" /><path d="M3 5H9" stroke="#fff" stroke-width="2" /><path d="M2 15.500L6 11.500L10 15.500Z" />`
        : svg`<rect y="8" width="12" height="10" fill="#000" /><path d="M3 13H9M6 10V16" stroke="#fff" stroke-width="1.600" /><path d="M2 2L6 6L10 2Z" />`}</svg>`;
  }

  private scene() {
    const rim = "M120 348L140 285L186 220L255 158L335 115L422 85L505 72H592L690 93L765 130L820 177L856 238L868 308L856 374L815 448L752 512L670 564L575 600L480 616H420L362 611L280 590L198 546L148 490L120 425Z";
    const bore = "M175 350L193 288L233 233L288 186L362 145L440 120L520 109H575L655 126L725 158L772 200L803 250L812 305L804 362L768 430L715 482L648 525L568 555L480 571L388 568L310 547L248 512L200 462L175 408Z";
    return html`<svg class="scene" viewBox="90 114 1528 896" preserveAspectRatio="xMinYMin slice" role="img" aria-label="원통 모델">
      <defs>
        <linearGradient id="body" gradientUnits="userSpaceOnUse" x1="215" y1="765" x2="915" y2="610">
          <stop offset="0" stop-color="#d2d2d2" /><stop offset=".12" stop-color="#e4e4e4" /><stop offset=".35" stop-color="#efefef" /><stop offset=".52" stop-color="#ebebeb" />
          <stop offset=".7" stop-color="#d6d6d6" /><stop offset=".86" stop-color="#ababab" /><stop offset="1" stop-color="#6c6c6c" />
        </linearGradient>
        <linearGradient id="bore" gradientUnits="userSpaceOnUse" x1="180" y1="420" x2="820" y2="300">
          <stop offset="0" stop-color="#6a6a6a" /><stop offset=".12" stop-color="#919191" /><stop offset=".32" stop-color="#c9c9c9" /><stop offset=".55" stop-color="#ededed" />
          <stop offset=".7" stop-color="#f3f3f3" /><stop offset=".88" stop-color="#e4e4e4" /><stop offset="1" stop-color="#c6c6c6" />
        </linearGradient>
      </defs>
      <g fill="none" stroke-width="1">
        <path d="M90 155L353 736" stroke="#0f0f9c" /><path d="M353 736L1167 113" stroke="#259a25" /><path d="M353 736L668 1011" stroke="#9c0f0f" />
        <path d="M90 508L353 736" stroke="#9c0f0f" stroke-dasharray="1 4" /><path d="M353 736L90 938" stroke="#1d6f1d" stroke-dasharray="1 4" /><path d="M353 736L478 1011" stroke="#0f0f9c" stroke-dasharray="1 4" />
      </g>
      <g transform="translate(380 430) scale(.33333)" stroke-linejoin="round" fill="none">
        <path d="M120 425L148 490L345 1080L395 1136L460 1175L535 1196L620 1203L710 1186L790 1152L858 1104L912 1040L945 972L954 910L868 308L480 400Z" fill="url(#body)" />
        <path d=${rim} fill="#fff" stroke="#000" stroke-width="3" />
        <path d=${bore} fill="url(#bore)" stroke="#000" stroke-width="3" />
        <path d="M175 408L200 462L248 512L310 547L388 568L480 571L568 555L648 525L715 482L768 430L804 362L812 305" stroke="#000" stroke-width="6" />
        <path d="M868 308L856 238L820 177L765 130L690 93L592 72H505L422 85L335 115L255 158L186 220L140 285L120 348V425L148 490L345 1080L395 1136L460 1175L535 1196L620 1203L710 1186L790 1152L858 1104L912 1040L945 972L954 910Z" stroke="#000" stroke-width="6" />
      </g>
      <g transform="translate(595 711) scale(.8)">${slab}${fatArrow("translate(16.500 3.500) scale(.9 1.150)")}</g>
    </svg>`;
  }

  render() {
    return html`
      <nav class="menu">${MENUS.map((m) => html`<button>${m}</button>`)}</nav>
      <div class="bars">
        ${MAIN_GROUPS.map((group) => html`<div class="bar"><div class="grip"></div>${group.map((t) => this.barItem(t))}</div>`)}
        <div class="bar wide"><div class="grip"></div>${this.toolButton("shadow", "그림자")}
          <div class="sun"><input class="range months" type="range" min="0" max="100" value="87" aria-label="날짜" />
            <div class="ticks">${[..."JFMAMJJASOND"].map((c) => html`<span>${c}</span>`)}</div></div>
          <div class="sun"><input class="range hours" type="range" min="0" max="100" value="63" aria-label="시간" />
            <div class="ticks hours-ticks"><span>07:08</span><span>정오</span><span>17:22</span></div></div>
        </div>
      </div>
      <main class="main">
        <aside class="side"><div class="toolbox"><div class="grip-h"></div>
          ${SIDE_GROUPS.map((g, i) => html`${i ? html`<div class="rule-h"></div>` : ""}<div class="pairs">${g.map(([id, label]) => this.toolButton(id, label))}</div>`)}
        </div></aside>
        <section class="stage">${this.scene()}
          <div class="keys"><div class="key">&lt;LButtonDown&gt;</div><div class="key">&lt;LButtonUp&gt;</div></div>
        </section>
        <aside class="tray">
          <div class="tray-title"><span>기본 트레이</span>
            <svg class="pin" viewBox="0 0 12 12" aria-hidden="true"><path d="M4 1.500H9V7H4ZM2 7.500H11M6.500 7.500V12M8 1.500V7" fill="none" stroke="#000" stroke-width="1.300" /></svg>
            <button class="close-red" aria-label="트레이 닫기">${this.closeMark()}</button></div>
          <div class="tray-body">
            <div class="panels">
              ${this.head("요소 정보")}
              <div class="info">
                <div class="info-top"><span>면</span><button aria-label="세부 정보 표시">${this.toggle(false)}</button></div>
                <div class="info-row">
                  <div class="face"><div class="half"></div></div><div class="face"><div class="half"></div></div>
                  <div class="fields">
                    <label for="layer">레이어(<u>L</u>):</label>
                    <div class="combo tahoma"><select id="layer"><option>Layer0</option></select><div class="knob"><div class="tri small"></div></div></div>
                    <label for="area">영역:</label><input id="area" class="field tahoma" readonly .value=${"150665 mm²"} />
                  </div>
                </div>
              </div>
              ${this.head("재질")}
              <div class="material">
                <div class="preview"><div class="half"></div></div>
                <div class="mat-name"><input class="field muted" aria-label="재질 이름" readonly .value=${"기본값"} /></div>
                <div class="mat-side"><button aria-label="보조 창">${this.toggle(true)}</button><button aria-label="재질 만들기">${icon("create")}</button><div class="half"></div></div>
              </div>
              <div class="tabs"><button class="tab on">선택</button><button class="tab">편집</button><button class="pick" aria-label="샘플 페인트">${icon("dropper")}</button></div>
              ${this.nav("색상")}
              <div class="list grow"><div class="swatches">${COLORS.map((c) => html`<button class="swatch" aria-label=${c} style=${styleMap({ backgroundColor: c })}></button>`)}</div>${this.scroll()}</div>
              <div class="split"></div>
              <div class="band">선택</div>
              ${this.nav("재질", true)}
              <div class="list end"><div class="swatches">${[0, 1, 2].map(() => html`<button class="swatch" aria-label="폴더">
                <svg class="folder" viewBox="0 0 60 60"><path d="M12 15L23 13L25 17L28 34H16Z" fill="#6da8d6" stroke="#38576f" /><path d="M17 21L47 12L43 40H18Z" fill="#b6976b" stroke="#555" stroke-width="1.400" /></svg></button>`)}</div>${this.scroll("", false)}</div>
            </div>
            ${this.scroll("outer")}
          </div>
        </aside>
        <div class="caption">밀기/끌기(Push/Pull) - P</div>
      </main>
      <footer class="status">
        <div class="signs">
          <svg class="sign" viewBox="0 0 18 18"><circle cx="9" cy="9" r="8" fill="#f5f5f5" stroke="#999" stroke-width="1.300" /><path d="M9 3.500A3 3 0 0 1 12 7Q11 11 9 14.500Q7 11 6 7A3 3 0 0 1 9 3.500Z" fill="#999" /></svg>
          <svg class="sign" viewBox="0 0 18 18"><circle cx="9" cy="9" r="8" fill="#fff" stroke="#111" stroke-width="1.600" /><circle cx="9" cy="4.800" r="1.600" /><path d="M6 7.500H12M9 7V14.500" stroke="#111" stroke-width="2.200" /></svg>
          <svg class="sign" viewBox="0 0 18 18"><circle cx="9" cy="9" r="8" fill="#aaa" stroke="#888" stroke-width="1.300" /><circle cx="9" cy="7" r="3.200" fill="#eee" /><path d="M3.500 14Q5 10.500 9 10.500T14.500 14Q9 18 3.500 14Z" fill="#eee" /></svg>
        </div>
        <div class="bar-line"></div>
        <p>끌어서 면을 밀거나 끌거나 값을 입력합니다. Ctrl = 새 시작 면 만들기 토글</p>
        <div class="bar-line"></div>
        <label for="dist">거리</label><input id="dist" .value=${"-530mm"} />
      </footer>`;
  }
}
